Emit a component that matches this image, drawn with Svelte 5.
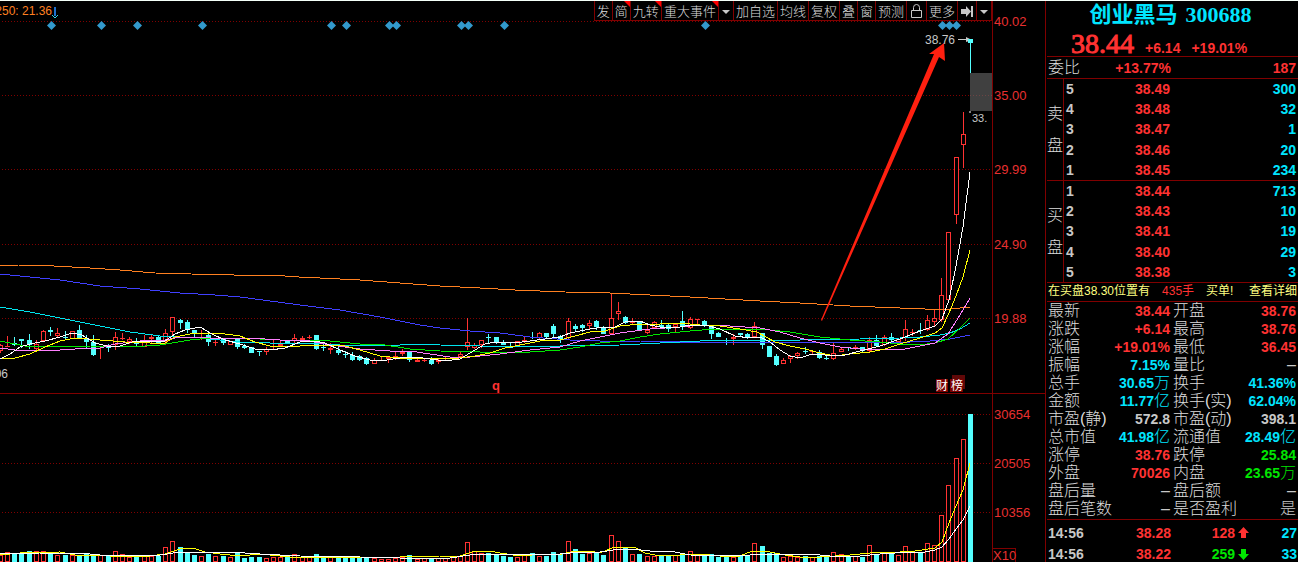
<script lang="ts">
  interface Candle {
    x: number;
    rise: boolean;
    high: number;
    top: number;
    bottom: number;
    low: number;
    volume: number;
  }

  // direction, high, body top, body bottom, low, volume top
  const raw = `
r 344 345 351 353 555|r 336 346 347 347 552|c 337 343 345 346 554|c 339 339 341 348 554|c 334 340 345 349 551
r 340 344 349 350 551|r 330 331 341 342 551|c 327 330 332 336 553|r 328 333 336 337 555|c 331 337 338 340 555
r 331 331 339 339 555|c 325 330 338 338 555|c 335 339 342 348 554|c 335 342 355 356 555|r 346 346 346 359 555
c 344 346 348 352 555|r 332 337 345 350 551|r 333 338 339 340 554|r 337 339 342 344 557|c 338 342 344 346 556
r 335 341 347 347 556|r 335 337 339 343 556|c 335 337 343 343 556|r 329 333 342 345 547|r 317 317 332 335 541
c 319 320 323 329 547|c 320 322 330 333 552|c 330 330 333 337 555|r 330 330 330 340 556|c 333 335 342 346 554
r 340 342 343 346 556|c 338 339 343 345 556|r 341 341 345 345 557|c 338 339 347 349 553|c 344 346 348 349 558
c 347 347 353 353 557|c 351 351 352 356 557|r 347 349 352 355 558|r 340 340 340 350 557|r 341 344 346 347 557
c 340 340 343 343 557|r 334 338 341 344 554|r 336 338 340 340 557|r 335 337 338 339 557|c 335 335 349 350 554
c 343 347 348 351 556|r 343 348 350 354 557|c 346 350 353 355 557|c 351 354 355 358 557|c 352 355 360 361 557
c 355 356 360 361 557|c 357 358 364 365 557|r 358 360 364 364 558|r 357 360 361 361 559|r 356 357 359 363 559
r 352 356 358 360 558|r 349 352 354 356 557|c 351 351 360 362 555|r 357 360 362 362 559|r 358 360 361 362 558
c 357 360 364 365 558|r 359 360 362 364 558|r 356 356 356 360 558|r 357 357 357 360 557|r 352 354 357 358 556
r 318 342 347 350 542|r 343 345 348 349 551|r 340 340 345 348 553|c 334 337 338 344 553|c 337 337 343 344 554
c 340 342 345 345 556|c 343 346 348 348 557|r 341 341 346 347 557|r 336 340 341 343 555|c 332 337 338 339 553
r 332 333 338 339 556|c 333 333 337 338 556|c 324 326 334 338 552|c 335 336 340 343 554|r 318 321 338 339 541
c 324 326 329 332 549|c 324 325 328 332 554|r 320 323 326 329 553|c 320 321 327 330 552|c 326 327 334 334 555
r 293 318 334 335 535|r 302 311 314 320 541|c 316 317 323 324 548|r 318 321 323 324 554|c 321 321 330 330 554
r 324 330 333 334 556|r 321 322 328 329 556|c 320 325 327 329 555|c 324 325 329 332 555|r 323 324 327 333 555
c 311 321 327 330 553|r 317 319 328 329 551|r 319 319 320 324 554|c 320 321 325 327 555|c 325 325 334 339 554
c 332 333 337 337 557|c 338 340 341 345 557|r 334 337 339 345 557|c 333 333 335 337 556|c 333 334 338 339 556
r 322 326 337 338 543|c 333 333 345 349 546|c 346 346 357 357 553|c 354 356 365 366 553|r 358 360 364 364 557
r 355 356 359 363 556|r 352 353 356 359 557|c 347 351 352 354 556|r 350 351 352 354 557|c 350 352 358 359 556
c 356 358 359 360 557|r 343 353 359 360 552|r 348 349 352 352 554|c 347 347 348 351 556|r 345 347 349 350 556
c 347 347 351 352 557|r 337 340 351 352 545|c 335 340 346 347 554|r 335 337 345 346 553|c 333 337 340 342 553
r 339 339 342 344 555|r 320 329 338 341 546|r 329 332 333 336 552|c 323 330 331 334 552|r 315 320 330 331 543
r 310 318 322 327 545|r 278 295 320 322 515|r 232 232 300 303 485|r 157 157 215 224 458|r 112 134 145 168 439
c 39 39 43 73 414`;

  const candles: Candle[] = raw
    .trim()
    .split(/[|\n]/)
    .map((row, i) => {
      const [dir, ...n] = row.split(" ");
      const [high, top, bottom, low, volume] = n.map(Number);
      return { x: Math.floor(0.4 + i * 7.185), rise: dir === "r", high, top, bottom, low, volume };
    });

  const averages = [
    { color: "#ff8020", points: "0,265 18,265 54,266 90,268 120,270 155,273 191,274 234,275 270,275 299,277 320,278 360,280 400,283 440,286 480,288 515,290 565,292 610,293 650,295 690,297 725,299 760,301 800,303 850,306 900,308 925,309 950,309 970,307" },
    { color: "#4040ff", points: "0,274 30,277 60,280 100,286 140,289 180,293 215,295 240,297 270,301 300,305 340,310 380,317 400,321 420,325 440,328 470,331 500,333 530,337 570,340 600,341 640,341 680,342 910,342 930,341 950,339 970,335" },
    { color: "#00e5ee", points: "0,307 30,312 60,318 100,326 130,332 160,336 200,338 240,342 270,343 310,343 340,345 400,345 420,344 440,345 480,346 560,346 620,345 680,342 720,340 800,340 860,339 900,338 920,337 940,335 950,333 960,329 970,323" },
    { color: "#00e600", points: "0,341 25,346 45,347 60,346 90,346 130,347 160,345 190,340 210,338 240,338 280,340 330,341 360,344 385,345 410,349 440,351 480,352 530,352 560,350 580,347 600,343 620,341 640,337 660,334 690,331 715,329 760,329 790,332 820,337 850,340 880,342 900,344 920,345 935,343 948,339 960,328 970,318" },
    { color: "#ff80ff", points: "0,348 15,350 45,351 75,349 100,348 115,344 140,341 165,340 180,337 210,338 250,338 280,340 310,341 330,345 360,349 390,351 410,351 430,354 450,357 470,357 480,356 500,354 530,350 560,347 580,341 600,337 620,333 650,329 680,327 700,325 715,325 760,328 780,332 800,338 820,343 840,347 860,349 900,350 920,346 935,343 948,334 960,315 970,298" },
    { color: "#ffff00", points: "0,359 15,358 30,354 45,347 60,341 75,338 100,340 125,342 150,343 165,343 175,337 190,334 205,333 225,334 240,336 255,342 270,346 300,346 320,345 345,346 360,350 380,356 400,358 420,359 460,358 475,356 490,353 505,348 520,345 540,341 560,340 575,336 590,332 605,331 620,326 640,324 660,324 680,323 700,325 720,326 740,329 757,332 775,342 790,346 805,349 820,353 835,356 850,354 870,352 885,349 900,344 920,338 935,333 942,328 949,313 956,296 963,277 970,250" },
    { color: "#ffffff", points: "0,359 10,354 20,347 30,344 45,341 60,337 72,333 82,335 95,343 107,346 120,346 135,341 165,341 175,334 185,330 200,327 212,334 225,340 240,344 255,349 270,350 285,348 300,342 315,341 325,343 340,350 355,356 370,360 380,361 400,358 415,357 430,359 445,361 460,359 475,350 485,344 495,342 515,343 530,341 545,339 560,337 570,333 590,329 605,327 615,327 625,322 640,321 650,325 665,328 680,327 690,325 705,325 720,329 735,336 750,338 760,337 770,342 780,350 790,356 800,358 812,354 825,355 845,355 860,351 880,346 900,339 920,331 935,326 942,319 949,300 956,266 963,227 970,172" },
    { color: "#ffff00", points: "0,555 20,553 60,552 75,555 110,556 150,556 165,554 180,549 193,548 205,552 220,554 240,556 260,554 290,557 400,557 440,556 460,556 472,552 490,551 500,553 520,556 545,554 562,554 575,551 590,551 600,553 612,548 634,547 645,553 660,556 700,554 720,556 737,557 750,552 765,551 785,555 800,557 820,557 850,555 870,553 900,552 915,551 935,548 942,542 949,523 956,506 963,490 970,463" },
    { color: "#ffffff", points: "0,554 40,553 80,553 100,555 130,556 160,555 180,552 230,552 260,554 300,556 360,557 400,558 450,558 470,555 490,554 520,554 560,554 580,552 600,552 620,549 632,549 650,551 675,552 690,555 740,556 760,554 810,554 830,556 860,556 880,554 910,552 925,552 935,550 942,547 949,539 956,529 963,520 970,506" },
  ];

  const priceTicks = [
    { y: 21, label: "40.02" },
    { y: 95, label: "35.00" },
    { y: 169, label: "29.99" },
    { y: 244, label: "24.90" },
    { y: 318, label: "19.88" },
    { y: 414, label: "30654" },
    { y: 463, label: "20505" },
    { y: 512, label: "10356" },
  ];

  const markers = [51, 101, 137, 202, 331, 346, 389, 396, 461, 468, 504, 705, 942, 949, 956];

  const tools = [
    { label: "发" },
    { label: "简", flag: true },
    { label: "九转", flag: true },
    { label: "重大事件", flag: true },
    { icon: "down", name: "重大事件菜单" },
    { label: "加自选" },
    { label: "均线" },
    { label: "复权" },
    { label: "叠" },
    { label: "窗" },
    { label: "预测" },
    { icon: "lock", name: "锁定" },
    { label: "更多" },
    { icon: "next", name: "下一个" },
    { icon: "down", name: "菜单" },
  ];

  const book = [
    {
      side: "卖盘",
      rows: [
        ["5", "38.49", "300"],
        ["4", "38.48", "32"],
        ["3", "38.47", "1"],
        ["2", "38.46", "20"],
        ["1", "38.45", "234"],
      ],
    },
    {
      side: "买盘",
      rows: [
        ["1", "38.44", "713"],
        ["2", "38.43", "10"],
        ["3", "38.41", "19"],
        ["4", "38.40", "29"],
        ["5", "38.38", "3"],
      ],
    },
  ];

  // label, value, tone, unit; two per row
  const stats = [
    [["最新", "38.44", "up", ""], ["开盘", "38.76", "up", ""]],
    [["涨跌", "+6.14", "up", ""], ["最高", "38.76", "up", ""]],
    [["涨幅", "+19.01%", "up", ""], ["最低", "36.45", "up", ""]],
    [["振幅", "7.15%", "info", ""], ["量比", "", "plain", "–"]],
    [["总手", "30.65", "info", "万"], ["换手", "41.36%", "info", ""]],
    [["金额", "11.77", "info", "亿"], ["换手(实)", "62.04%", "info", ""]],
    [["市盈(静)", "572.8", "plain", ""], ["市盈(动)", "398.1", "plain", ""]],
    [["总市值", "41.98", "info", "亿"], ["流通值", "28.49", "info", "亿"]],
    [["涨停", "38.76", "up", ""], ["跌停", "25.84", "down", ""]],
    [["外盘", "70026", "up", ""], ["内盘", "23.65", "down", "万"]],
    [["盘后量", "", "plain", "–"], ["盘后额", "", "plain", "–"]],
    [["盘后笔数", "", "plain", "–"], ["是否盈利", "", "plain", "是"]],
  ];

  const ticks = [
    { time: "14:56", price: "38.28", volume: "128", tone: "up", count: "27" },
    { time: "14:56", price: "38.22", volume: "259", tone: "down", count: "33" },
  ];
</script>

<main class="terminal">
  <section class="chart">
    <div class="toolbar">
      {#each tools as tool}
        <button type="button" class="tool" class:tool--flag={tool.flag} aria-label={tool.name}>
          {#if tool.icon === "down"}
            <svg width="10" height="16" viewBox="0 0 10 16"><path d="M1 7h8l-4 4z" fill="#c8c8c8" /></svg>
          {:else if tool.icon === "lock"}
            <svg width="15" height="16" viewBox="0 0 15 16" fill="none" stroke="#c8c8c8">
              <path d="M2.5 7.5h10v7h-10zM4.5 7V4.5a3 3 0 0 1 6 0V7" />
            </svg>
          {:else if tool.icon === "next"}
            <svg width="14" height="16" viewBox="0 0 14 16" fill="#c8c8c8">
              <path d="M1 6h5V3l5 5.5-5 5.5v-3H1zM11 3h2v11h-2z" />
            </svg>
          {:else}
            {tool.label}
          {/if}
        </button>
      {/each}
    </div>

    <svg class="plot" viewBox="0 1 1045 561" role="img" aria-label="K线图">
      <g class="frame">
        {#each priceTicks as tick}
          <line class="grid" x1="2" x2="992" y1={tick.y + 0.5} y2={tick.y + 0.5} />
        {/each}
        <line x1="0" x2="1045" y1="393.5" y2="393.5" />
        <line x1="992.5" x2="992.5" y1="1" y2="562" />
        <rect x="992.5" y="548.5" width="23" height="14" fill="none" />
      </g>

      {#each markers as x}
        <path d="M{x + 0.5} 21l4.5 4.5-4.5 4.5-4.5-4.5z" fill="#3399cc" />
      {/each}

      <g class="candles">
        {#each candles as c}
          <g class={c.rise ? "rise" : "fall"}>
            <line x1={c.x + 0.5} x2={c.x + 0.5} y1={c.high} y2={c.low} />
            {#if c.bottom > c.top}
              <rect x={c.x - 1.5} y={c.top + 0.5} width="4" height={c.bottom - c.top - 1 || 0.1} />
            {/if}
            <rect x={c.x - 1.5} y={c.volume + 0.5} width="4" height={561 - c.volume} />
          </g>
        {/each}
      </g>

      <g class="averages">
        {#each averages as line}
          <polyline points={line.points} stroke={line.color} />
        {/each}
      </g>

      <rect x="970" y="73" width="22" height="38" fill="#404040" />
      <line x1="970" x2="992" y1="95.5" y2="95.5" stroke="#6c4444" stroke-dasharray="1 2" />
      <rect x="969" y="111" width="2" height="2" fill="#808080" />
      <path d="M958 39.5h10" stroke="#c8c8c8" />
      <path d="M966 37l6 3-6 2z" fill="#c8c8c8" />
      <rect x="968" y="39" width="5" height="4" fill="#54ffff" />
      <polygon points="944,43 945,61 939,57 822,321 821,320 934,54 929,54" fill="#ff2010" />

      <g class="labels">
        {#each priceTicks as tick}
          <text class="axis" x="994" y={tick.y + 5}>{tick.label}</text>
        {/each}
        <text class="axis" x="993" y="560">X10</text>
        <text x="925" y="44" fill="#c8c8c8">38.76</text>
        <text class="small" x="972" y="122" fill="#c8c8c8">33.</text>
        <text x="52" y="15" text-anchor="end" fill="#ff8020">250: 21.36</text>
        <text x="8" y="378" text-anchor="end" fill="#c8c8c8">06</text>
        <text class="q" x="492" y="390">q</text>
      </g>
      <path d="M55 7v9" fill="none" stroke="#1e70cc" stroke-width="2" />
      <path d="M52 15l3 3 3-3" fill="none" stroke="#30d0e8" />

      <rect x="952" y="375" width="13" height="14" fill="#600808" />
      <rect x="936" y="379" width="12" height="13" fill="#7a0000" />
      <rect x="950" y="379" width="13" height="13" fill="#7a0000" />
      <text class="tag" x="936" y="390">财</text>
      <text class="tag" x="951" y="390">榜</text>
    </svg>
  </section>

  <aside class="quote">
    <h1 class="name"><span>创业黑马</span> 300688</h1>
    <p class="last up">
      <strong>38.44</strong>
      <span>+6.14</span>
      <span>+19.01%</span>
    </p>

    <div class="ratio">
      <span class="label">委比</span>
      <b class="up">+13.77%</b>
      <b class="up">187</b>
    </div>

    {#each book as half}
      <div class="book">
        <div class="book__side">
          {#each half.side as char}<span>{char}</span>{/each}
        </div>
        <table class="book__rows">
          <tbody>
            {#each half.rows as [level, price, size]}
              <tr>
                <td class="level">{level}</td>
                <td class="up price">{price}</td>
                <td class="info">{size}</td>
              </tr>
            {/each}
          </tbody>
        </table>
      </div>
    {/each}

    <div class="notice">
      <span>在买盘38.30位置有</span>
      <span class="up">435手</span>
      <span>买单!</span>
      <a href="#detail">查看详细</a>
    </div>

    <table class="stats">
      <tbody>
        {#each stats as pair}
          <tr>
            {#each pair as [label, value, tone, unit]}
              <th scope="row">{label}</th>
              <td class={tone}>{value}{#if unit}<span class="unit">{unit}</span>{/if}</td>
            {/each}
          </tr>
        {/each}
      </tbody>
    </table>

    <div class="ticks">
      <table>
        <tbody>
          {#each ticks as tick}
            <tr>
              <td class="time">{tick.time}</td>
              <td class="up">{tick.price}</td>
              <td class={tick.tone}>{tick.volume}</td>
              <td class="arrow {tick.tone}">
                <svg width="11" height="12" viewBox="0 0 11 12" fill="currentColor">
                  {#if tick.tone === "up"}
                    <path d="M5.5 0L11 6H8v5H3V6H0z" />
                  {:else}
                    <path d="M5.5 12L0 6h3V1h5v5h3z" />
                  {/if}
                </svg>
              </td>
              <td class="info">{tick.count}</td>
            </tr>
          {/each}
        </tbody>
      </table>
    </div>
  </aside>
</main>

<style>
  :global(body) {
    background: #000;
    overflow: hidden;
  }
  .terminal {
    --line: #800000;
    --text: #c8c8c8;
    --label: #dcdcdc;
    --up: #ff3232;
    --down: #00e600;
    --info: #00e5ff;
    display: grid;
    grid-template-columns: minmax(0, 1fr) 253px;
    border-top: 1px solid #f4fff8;
    background: #000;
    color: var(--text);
    font-family: "Liberation Sans", "Noto Sans CJK SC", sans-serif;
    font-size: 14px;
  }
  .up {
    color: var(--up);
  }
  .down {
    color: var(--down);
  }
  .info {
    color: var(--info);
  }

  /* chart */
  .chart {
    position: relative;
  }
  .plot {
    display: block;
    width: 100%;
  }
  .toolbar {
    position: absolute;
    top: 0;
    right: 53px;
    z-index: 1;
    display: flex;
    height: 20px;
    box-sizing: border-box;
    border: solid var(--line);
    border-width: 0 0 1px 1px;
    background: #000;
  }
  .tool {
    position: relative;
    display: flex;
    align-items: center;
    padding: 0 2px;
    border: 0;
    border-right: 1px solid var(--line);
    background: none;
    color: var(--label);
    font: 300 13px/18px "Noto Sans CJK SC", sans-serif;
    white-space: nowrap;
  }
  .tool--flag::after {
    content: "";
    position: absolute;
    top: 0;
    right: 0;
    border: 3px solid;
    border-color: #f00 #f00 transparent transparent;
  }
  .frame {
    stroke: var(--line);
    shape-rendering: crispEdges;
  }
  .grid {
    stroke-dasharray: 1 2;
  }
  .candles {
    shape-rendering: crispEdges;
  }
  .rise {
    fill: #000;
    stroke: var(--up);
  }
  .fall {
    fill: #54ffff;
    stroke: #54ffff;
  }
  .averages {
    fill: none;
    shape-rendering: crispEdges;
  }
  .labels {
    font-size: 12px;
  }
  .labels .axis {
    fill: #e83030;
    font-size: 13px;
  }
  .labels .small {
    font-size: 11px;
  }
  .labels .q {
    fill: var(--up);
    font-size: 13px;
    font-weight: bold;
  }
  .tag {
    fill: #fff;
    font-size: 12px;
  }

  /* quote panel */
  .quote {
    border-left: 1px solid var(--line);
    padding-left: 1px;
  }
  .name {
    display: flex;
    justify-content: center;
    gap: 8px;
    margin: 0;
    padding-right: 4px;
    color: var(--info);
    font: bold 22px/27px "Liberation Serif", "Noto Sans CJK SC", serif;
  }
  .last {
    display: flex;
    align-items: baseline;
    gap: 11px;
    height: 28px;
    margin: 0;
    padding-left: 24px;
    font-weight: bold;
    line-height: 32px;
  }
  .last strong {
    font: 28px/32px "Liberation Serif", serif;
    -webkit-text-stroke: 1px;
  }
  .ratio {
    display: grid;
    grid-template-columns: 59px 64px 1fr;
    align-items: center;
    height: 21px;
    border-top: 1px solid var(--line);
    padding: 0 2px 0 1px;
    line-height: 20px;
    text-align: right;
  }
  .label,
  .stats th {
    color: var(--label);
    font-size: 16px;
    font-weight: 300;
    text-align: left;
  }
  .book {
    display: grid;
    grid-template-columns: 17px 1fr;
    height: 101px;
    border-top: 1px solid var(--line);
  }
  .book__side {
    display: flex;
    flex-direction: column;
    align-items: center;
    justify-content: center;
    gap: 14px;
    border-right: 1px solid var(--line);
    color: var(--label);
    font-size: 16px;
    font-weight: 300;
    line-height: 18px;
  }
  table {
    width: 100%;
    border-collapse: collapse;
    table-layout: fixed;
    font-weight: bold;
  }
  td,
  th {
    padding: 0;
    text-align: right;
  }
  .book__rows td:last-child {
    padding-right: 2px;
  }
  .book__rows .level {
    width: 14px;
    padding-left: 2px;
    text-align: left;
  }
  .book__rows .price {
    width: 90px;
  }
  .notice {
    display: flex;
    align-items: center;
    gap: 12px;
    height: 16px;
    border: solid var(--line);
    border-width: 1px 0;
    padding: 0 1px 2px;
    color: #ffff80;
    font-size: 12px;
    line-height: 14px;
    white-space: nowrap;
  }
  .notice a {
    margin-left: auto;
    color: inherit;
    text-decoration: none;
  }
  .stats {
    margin: 0 0 1px 1px;
    width: calc(100% - 1px);
  }
  .stats tr {
    height: 18px;
    line-height: 18px;
  }
  .stats th {
    width: 70px;
    white-space: nowrap;
  }
  .stats th:first-child {
    width: 61px;
  }
  .stats td:nth-child(2) {
    width: 61px;
    padding-right: 3px;
  }
  .stats td:last-child {
    padding-right: 2px;
  }
  .stats .plain {
    color: var(--text);
  }
  .unit {
    font-size: 16px;
    font-weight: 300;
    line-height: 16px;
  }
  .ticks {
    border-top: 1px solid var(--line);
    padding: 2px 1px 0;
  }
  .ticks tr {
    height: 21px;
  }
  .ticks .time {
    width: 59px;
    text-align: left;
  }
  .ticks td:nth-child(2),
  .ticks td:nth-child(3) {
    width: 64px;
  }
  .ticks .arrow {
    width: 14px;
  }
  .arrow svg {
    display: block;
    margin-left: auto;
  }
</style>
